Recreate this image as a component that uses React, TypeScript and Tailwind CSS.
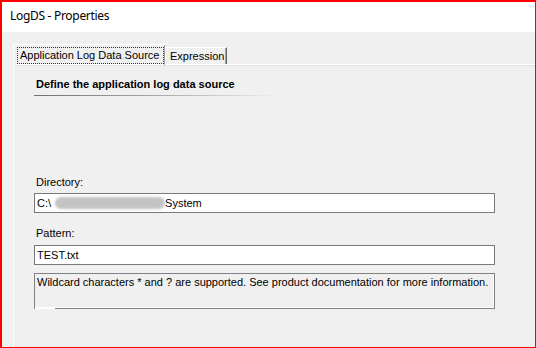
const sans = "font-['Liberation_Sans',Arial,sans-serif]";

const Field = ({ children }: { children: React.ReactNode }) => (
    <div className="flex h-[20px] w-[461px] items-center border border-[#7a7a7a] bg-white pl-[2px] text-[11px] leading-[18px] text-black">
        {children}
    </div>
);

export default function App() {
    return (
        <div className={`flex h-[348px] w-[536px] flex-col overflow-hidden border-t-2 border-l-2 border-r border-b border-[#ff0000] bg-[#f0f0f0] ${sans}`}>
            {/* Title bar */}
            <div className="h-[30px] shrink-0 bg-white pl-[8px] pt-[6px] font-['Noto_Sans',sans-serif] text-[12px] leading-[16px] tracking-[-0.3px] text-black">
                LogDS - Properties
            </div>

            <div className="flex flex-1 flex-col pl-[11px] pt-[12px]">
                {/* Tabs */}
                <div className="relative z-10 flex items-end">
                    <div className="mb-[-1px] h-[21px] w-[152px] border-t border-l border-white pl-[3px] pr-[1px] pt-[2px] shadow-[inset_-1px_0_0_#a0a0a0]">
                        <div className="flex h-[17px] items-center border border-dotted border-[#333] pl-[2px] text-[11px] leading-[13px] text-black">
                            Application Log Data Source
                        </div>
                    </div>
                    <div className="flex h-[17px] w-[62px] items-center overflow-hidden whitespace-nowrap border-t border-l border-r border-white border-r-[#696969] pl-[4px] text-[11px] leading-[13px] text-black shadow-[inset_-1px_0_0_#a0a0a0]">
                        Expression
                    </div>
                </div>

                {/* Tab panel */}
                <div className="flex flex-1 flex-col border-t border-l border-white">
                    <div className="h-px bg-[#e3e3e3]" />
                    <div className="flex flex-col pl-[20px]">
                        <div className="mt-[12px] pl-[2px] text-[11px] font-bold leading-[13px] text-black">
                            Define the application log data source
                        </div>
                        <div className="mt-[4px] h-px w-[244px] bg-gradient-to-r from-[#707070] via-[#a8a8a8] to-transparent" />

                        <div className="mt-[80px] pl-[2px] text-[11px] leading-[13px] text-black">Directory:</div>
                        <div className="mt-[4px]">
                            <Field>
                                <span>C:\</span>
                                <span className="ml-[4px] inline-block h-[12px] w-[110px] rounded-full bg-[#c4c4c4] blur-[1px]" />
                                <span>System</span>
                            </Field>
                        </div>

                        <div className="mt-[14px] pl-[2px] text-[11px] leading-[13px] text-black">Pattern:</div>
                        <div className="mt-[5px]">
                            <Field>TEST.txt</Field>
                        </div>

                        <div className="mt-[8px] h-[36px] w-[461px] border border-[#828282] px-[2px] pt-[2px] text-[11px] leading-[13px] text-black shadow-[inset_-1px_-1px_0_#ffffff]">
                            Wildcard characters * and ? are supported. See product documentation for more information.
                        </div>
                        <div className="mt-[-1px] ml-px h-px w-[20px] bg-white" />
                    </div>
                </div>
            </div>
        </div>
    );
}
